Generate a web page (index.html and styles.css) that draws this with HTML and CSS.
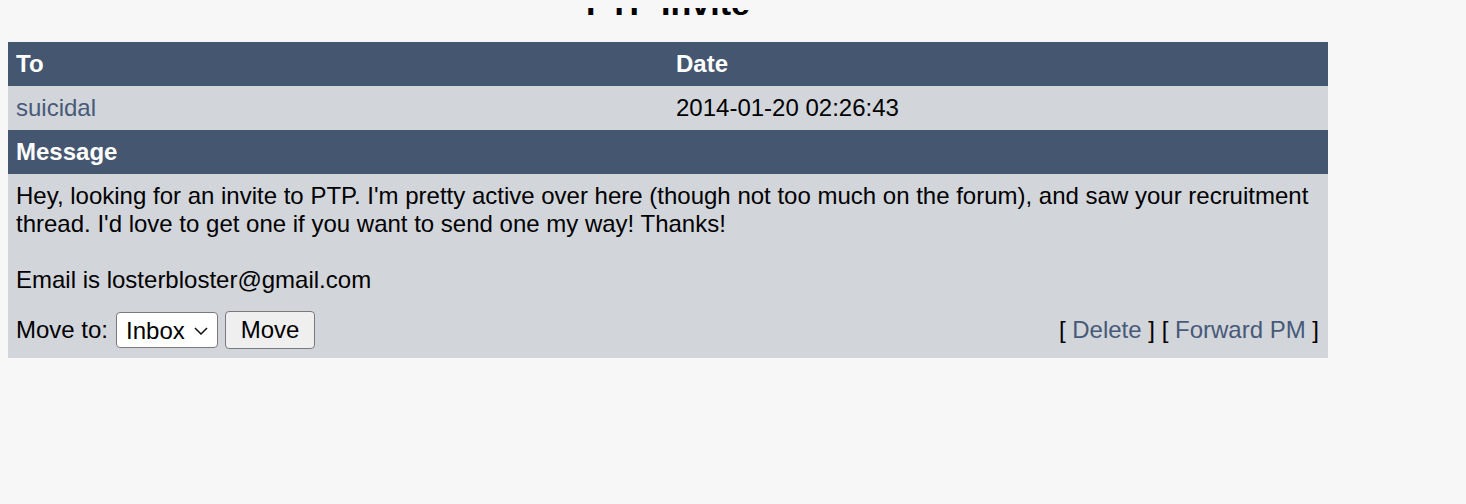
FILE: index.html
```html
<!DOCTYPE html>
<html>
<head>
<meta charset="utf-8">
<link rel="stylesheet" href="styles.css">
</head>
<body>
<div class="page">
  <h1 class="title">PTP Invite</h1>
  <div class="pm">
    <div class="row head">
      <div class="cell">To</div>
      <div class="cell">Date</div>
    </div>
    <div class="row data">
      <div class="cell"><a href="#" class="link">suicidal</a></div>
      <div class="cell">2014-01-20 02:26:43</div>
    </div>
    <div class="row head">
      <div class="cell">Message</div>
    </div>
    <div class="body">
      <div class="text">Hey, looking for an invite to PTP. I'm pretty active over here (though not too much on the forum), and saw your recruitment thread. I'd love to get one if you want to send one my way! Thanks!<br><br>Email is losterbloster@gmail.com</div>
      <div class="actions">
        <form class="move">
          <span>Move to:</span>
          <span class="selwrap">
            <select class="sel"><option>Inbox</option></select>
            <svg class="chev" width="14" height="8" viewBox="0 0 14 8"><path d="M1 1 L7 7 L13 1" fill="none" stroke="#111" stroke-width="1.5"/></svg>
          </span>
          <button type="button" class="btn">Move</button>
        </form>
        <div class="links">[ <a href="#" class="link">Delete</a> ] [ <a href="#" class="link">Forward PM</a> ]</div>
      </div>
    </div>
  </div>
</div>
</body>
</html>
```
FILE: styles.css
```css
html, body {
  background: #f7f7f7;
}
body {
  margin: 8px;
  font-family: "Liberation Sans", Arial, sans-serif;
  color: #000;
}
.page {
  width: 1320px;
}
.title {
  margin: -25px 0 19px;
  font-size: 34px;
  line-height: 40px;
  font-weight: bold;
  text-align: center;
}
.pm {
  font-size: 24px;
  line-height: 28px;
}
.row {
  display: flex;
}
.row .cell {
  flex: 1 1 0;
  padding: 8px;
}
.head {
  background: #455670;
  color: #fff;
  font-weight: bold;
}
.data {
  background: #d2d5da;
}
.link {
  color: #485a79;
  text-decoration: none;
}
.body {
  background: #d2d5da;
  padding: 8px;
}
.actions {
  display: flex;
  justify-content: space-between;
  align-items: center;
  margin-top: 16px;
  height: 40px;
}
.move {
  display: flex;
  align-items: center;
  margin: 0;
}
.selwrap {
  position: relative;
  display: inline-block;
  margin-left: 8px;
  height: 36px;
}
.sel {
  -webkit-appearance: none;
  appearance: none;
  width: 102px;
  height: 36px;
  padding: 0 0 0 9px;
  font-family: "Liberation Sans", Arial, sans-serif;
  font-size: 24px;
  color: #000;
  background: #fff;
  border: 1px solid #7a7a7a;
  border-radius: 4px;
  margin: 0;
}
.chev {
  position: absolute;
  right: 10px;
  top: 15px;
  pointer-events: none;
}
.btn {
  margin-left: 7px;
  width: 90px;
  height: 38px;
  font-family: "Liberation Sans", Arial, sans-serif;
  font-size: 24px;
  color: #000;
  background: #efefef;
  border: 1px solid #7a7a7a;
  border-radius: 4px;
  padding: 0;
}
.links {
  padding-right: 1px;
}
```
